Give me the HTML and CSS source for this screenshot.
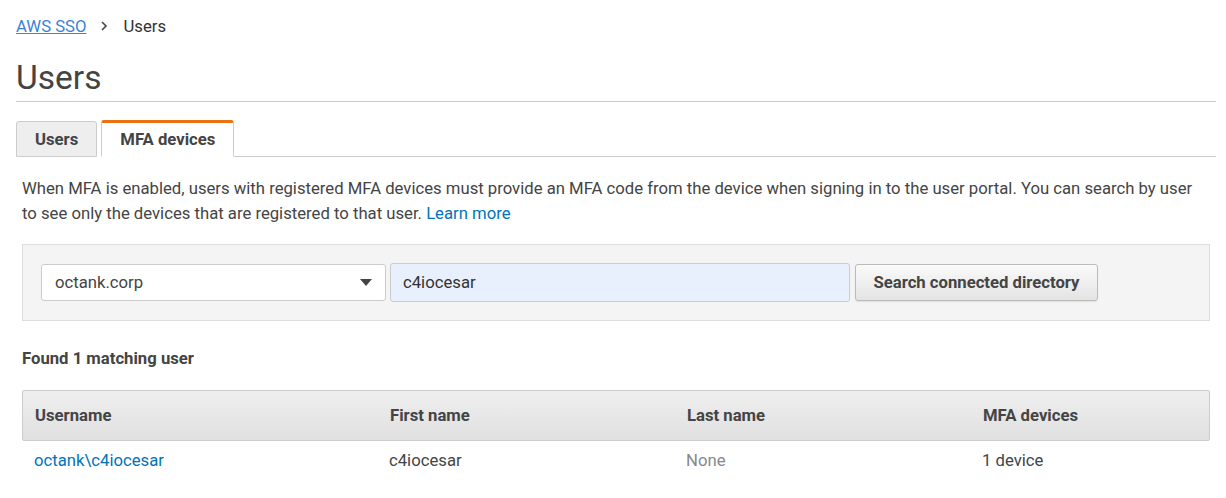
FILE: index.html
```html
<!DOCTYPE html>
<html>
<head>
<meta charset="utf-8">
<link rel="stylesheet" href="styles.css">
</head>
<body>
<div class="page">
  <nav class="crumbs">
    <a class="crumb-link" href="#">AWS SSO</a>
    <svg class="crumb-sep" width="8" height="10" viewBox="0 0 8 10"><path d="M2 1l4 4-4 4" fill="none" stroke="#444" stroke-width="1.6"/></svg>
    <span class="crumb-cur">Users</span>
  </nav>
  <h1 class="title">Users</h1>
  <div class="tabs">
    <div class="tab">Users</div>
    <div class="tab active">MFA devices</div>
    <div class="tab-fill"></div>
  </div>
  <div class="content">
    <p class="desc">When MFA is enabled, users with registered MFA devices must provide an MFA code from the device when signing in to the user portal. You can search by user to see only the devices that are registered to that user. <a href="#" class="link">Learn more</a></p>
    <div class="search-panel">
      <div class="select">
        <span>octank.corp</span>
        <svg width="12" height="7" viewBox="0 0 12 7"><path d="M0 0h12L6 7z" fill="#444"/></svg>
      </div>
      <div class="input">c4iocesar</div>
      <button class="btn">Search connected directory</button>
    </div>
    <div class="found">Found 1 matching user</div>
    <div class="table">
      <div class="thead">
        <div class="cell">Username</div>
        <div class="cell">First name</div>
        <div class="cell">Last name</div>
        <div class="cell">MFA devices</div>
      </div>
      <div class="trow">
        <div class="cell"><a href="#" class="link">octank\c4iocesar</a></div>
        <div class="cell">c4iocesar</div>
        <div class="cell muted">None</div>
        <div class="cell">1 device</div>
      </div>
    </div>
  </div>
</div>
</body>
</html>
```

FILE: styles.css
```css
* { box-sizing: border-box; }
html, body { margin: 0; padding: 0; background: #fff; }
body { font-family: Roboto, "Liberation Sans", Arial, sans-serif; color: #444; font-size: 16.7px; }
.page { padding: 0 10px 0 16px; }
.crumbs { display: flex; align-items: center; height: 26px; margin-top: 13px; }
.crumb-link { color: #3b82d6; text-decoration: underline; font-size: 16.7px; }
.crumb-sep { margin: 0 15px 0 14px; }
.crumb-cur { color: #333; font-size: 16.7px; }
.title { margin: 19px 0 0; font-size: 33.5px; font-weight: 400; color: #444; line-height: 40px; height: 44px; border-bottom: 1px solid #ccc; }
.tabs { display: flex; align-items: flex-end; margin-top: 17px; height: 38px; }
.tab { height: 36px; padding: 0 18px; display: flex; align-items: center; font-weight: 700; font-size: 16.7px; color: #444; background: #eee; border: 1px solid #ccc; border-radius: 3px 3px 0 0; margin-right: 4px; }
.tab.active { height: 37px; background: #fff; border-top: 3px solid #ec7211; border-bottom: 1px solid #fff; }
.tab-fill { flex: 1; border-bottom: 1px solid #ccc; margin-left: -4px; }
.content { padding: 0 0 0 6px; width: 1194px; }
.desc { margin: 19px 0 0; line-height: 25px; font-size: 16.7px; color: #444; width: 1186px; }
.link { color: #0073bb; text-decoration: none; }
.search-panel { margin-top: 18px; background: #f4f4f4; border: 1px solid #ddd; height: 77px; display: flex; align-items: center; padding: 0 18px; width: 1188px; }
.select { width: 345px; height: 37px; background: #fff; border: 1px solid #ccc; border-radius: 3px; display: flex; align-items: center; justify-content: space-between; padding: 0 13px; font-size: 16.7px; color: #444; }
.input { width: 460px; height: 39px; margin-left: 4px; background: #e8f0fe; border: 1px solid #ccc; border-radius: 3px; display: flex; align-items: center; padding: 0 12px; font-size: 16.7px; color: #333; }
.btn { margin-left: 5px; height: 37px; width: 243px; border: 1px solid #bbb; border-radius: 3px; background: linear-gradient(#fafafa, #e4e4e4); font-family: inherit; font-weight: 700; font-size: 16.7px; color: #444; padding: 0 10px; box-shadow: 0 1px 1px rgba(0,0,0,0.08); }
.found { margin-top: 28px; font-weight: 700; font-size: 16.7px; color: #444; line-height: 20px; }
.table { margin-top: 21px; width: 1188px; }
.thead, .trow { display: grid; grid-template-columns: 355px 297px 296px 1fr; }
.thead { height: 51px; background: linear-gradient(#efefef, #e0e0e0); border: 1px solid #ccc; border-radius: 2px; align-items: center; font-weight: 700; }
.thead .cell { padding-left: 12px; }
.trow { height: 38px; align-items: center; }
.trow .cell { padding-left: 12px; }
.muted { color: #888; }
```
